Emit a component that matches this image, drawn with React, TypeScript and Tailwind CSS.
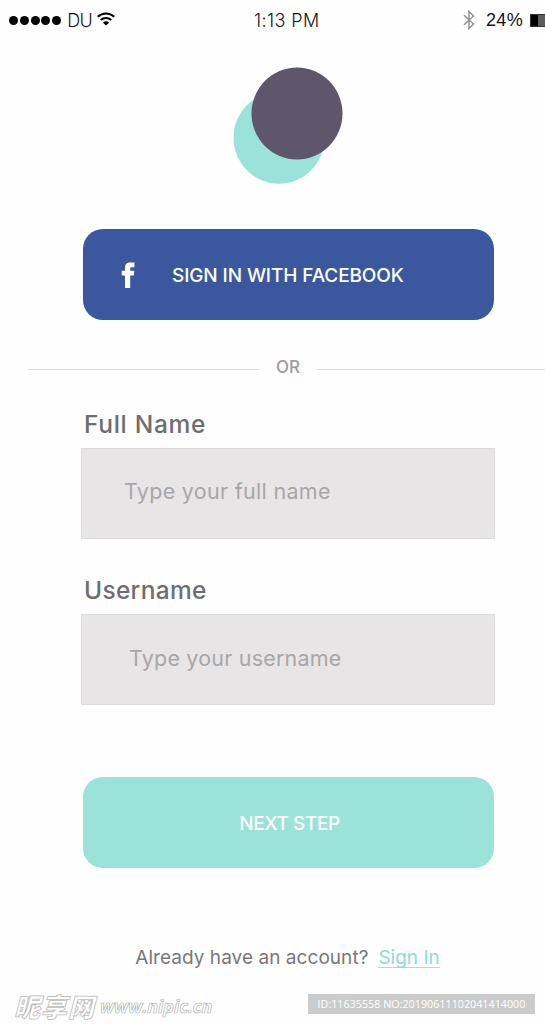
import { useState } from "react";

interface FieldProps {
  id: string;
  label: string;
  placeholder: string;
  labelClass: string;
  inputClass: string;
}

function Field({ id, label, placeholder, labelClass, inputClass }: FieldProps) {
  const [value, setValue] = useState("");

  return (
    <div className="flex flex-col items-start w-[414px]">
      <label
        htmlFor={id}
        className={`h-8 leading-8 ml-[3px] mb-2 text-[24.5px] font-medium text-[#6d6e70] whitespace-nowrap ${labelClass}`}
      >
        {label}
      </label>
      <input
        id={id}
        type="text"
        value={value}
        onChange={(e) => setValue(e.target.value)}
        placeholder={placeholder}
        className={`w-full h-[91px] bg-[#e7e5e6] border border-[#dbdcdc] outline-none text-[21.5px] text-[#6d6e70] placeholder:text-[#a8a7a8] placeholder:opacity-100 ${inputClass}`}
      />
    </div>
  );
}

function StatusBar() {
  return (
    <header className="relative flex items-center justify-between h-10 pl-[9px] font-['Liberation_Sans',Arial,sans-serif] text-[18px] text-[#161616]">
      <div className="flex items-center">
        <div className="flex gap-[1.8px]">
          {[0, 1, 2, 3, 4].map((i) => (
            <span key={i} className="size-[9px] rounded-full bg-black" />
          ))}
        </div>
        <span className="w-[25px] ml-[6px] font-['Inter',sans-serif] font-light tracking-[-0.6px]">
          DU
        </span>
        <svg
          viewBox="0 0 18 14"
          className="w-[18px] h-[14px] ml-[5px] -mt-0.5"
          fill="none"
          stroke="#000"
          strokeWidth="2"
        >
          <path d="M.8 4.7a11.8 11.8 0 0 1 16.4 0" />
          <path d="M3.8 8a7.5 7.5 0 0 1 10.4 0" />
          <path d="M9 13.6 6 10.8a4.3 4.3 0 0 1 6 0z" fill="#000" stroke="none" />
        </svg>
      </div>
      <span className="absolute left-[254px] font-['Inter',sans-serif] font-light tracking-[0.4px] whitespace-nowrap">
        1:13 PM
      </span>
      <div className="flex items-center">
        <svg
          viewBox="0 0 12 20"
          className="w-3 h-5 mr-[11px]"
          fill="none"
          stroke="#929292"
          strokeWidth="1.5"
        >
          <path d="M1 5.2 10.5 14 6 18.5v-17L10.5 6 1 14.8" />
        </svg>
        <span className="tracking-[0.3px]">24%</span>
        <span className="flex w-[15px] h-[13px] ml-[7px] bg-[#5c5c5c] border-y border-l border-[#333]">
          <span className="w-[7px] bg-black" />
        </span>
      </div>
    </header>
  );
}

function Logo() {
  return (
    <svg viewBox="0 0 110 118" className="w-[110px] h-[118px] mt-[27px] mr-px">
      <ellipse cx="46" cy="70.7" rx="45.5" ry="46" fill="#9be2d9" />
      <ellipse cx="64" cy="46.5" rx="45.5" ry="46" fill="#5e566a" />
    </svg>
  );
}

function Watermark() {
  return (
    <footer className="flex items-start justify-between w-full pl-3.5 pr-2.5 mt-6">
      <div className="flex items-center h-6 text-white italic whitespace-nowrap">
        <span className="font-['Noto_Sans_CJK_SC',sans-serif] text-[26px] font-black leading-6 tracking-[1px] [-webkit-text-stroke:0.8px_#bcbcbc]">
          昵享网
        </span>
        <span className="ml-[5px] font-['Open_Sans',sans-serif] text-[18px] font-bold leading-6 tracking-[-0.1px] [-webkit-text-stroke:0.7px_#b4b4b4]">
          www.nipic.cn
        </span>
      </div>
      <div className="w-[227px] h-5 bg-[#cbcbcb] text-center font-['Open_Sans',sans-serif] text-[10.75px] leading-5 text-white whitespace-nowrap">
        ID:11635558 NO:20190611102041414000
      </div>
    </footer>
  );
}

export default function App() {
  return (
    <div className="w-[545px] h-[1024px] overflow-hidden bg-[#fefefe] font-['Inter',sans-serif]">
      <StatusBar />
      <main className="flex flex-col items-center pl-[31px]">
        <Logo />
        <button
          type="button"
          className="flex items-center w-[411px] h-[91px] mt-[44px] ml-px pl-[38px] rounded-[20px] bg-[#3b589e] text-white"
        >
          <svg viewBox="0 0 14 26" className="w-[14px] h-[26px]" fill="#fff">
            <path d="M4 26V13.5H.7V8.8H4V6.2C4 2.2 5.7.5 9.4.5h4v4.8h-2.5c-1.4 0-1.7.6-1.7 1.8v1.7h4.1l-.5 4.7H9.2V26z" />
          </svg>
          <span className="ml-[37px] pt-[3px] text-[19px] font-medium tracking-[-0.1px] whitespace-nowrap">
            SIGN IN WITH FACEBOOK
          </span>
        </button>
        <div className="flex items-center self-stretch h-6 mt-[37px] -ml-[3px]">
          <span className="w-[231px] h-px bg-[#dcdcdc]" />
          <span className="w-[58px] pb-0.5 text-center text-[17px] font-medium text-[#9c9c9c]">
            OR
          </span>
          <span className="flex-1 h-px bg-[#dcdcdc]" />
        </div>
        <form className="flex flex-col items-center" onSubmit={(e) => e.preventDefault()}>
          <div className="flex flex-col gap-[35px] mt-[27px]">
            <Field
              id="full-name"
              label="Full Name"
              placeholder="Type your full name"
              labelClass="tracking-[0.7px]"
              inputClass="pl-[42px] pb-[5px] tracking-[0.3px]"
            />
            <Field
              id="username"
              label="Username"
              placeholder="Type your username"
              labelClass="tracking-[0.3px]"
              inputClass="pl-[47px] pb-[3px] tracking-[0.2px]"
            />
          </div>
          <button
            type="submit"
            className="w-[411px] h-[91px] mt-[72px] ml-px pt-[3px] pl-0.5 rounded-[20px] bg-[#9be2d9] text-white text-[19px] font-medium tracking-[-0.4px]"
          >
            NEXT STEP
          </button>
        </form>
        <p className="flex h-6 mt-[78px] mr-px text-[19px] leading-6 text-[#77787a] whitespace-nowrap">
          <span className="tracking-[0.05px]">Already have an account?</span>
          <a href="#" className="h-[22px] ml-2.5 border-b border-[#9be2d9] text-[#8fdcd2]">
            Sign In
          </a>
        </p>
      </main>
      <Watermark />
    </div>
  );
}
